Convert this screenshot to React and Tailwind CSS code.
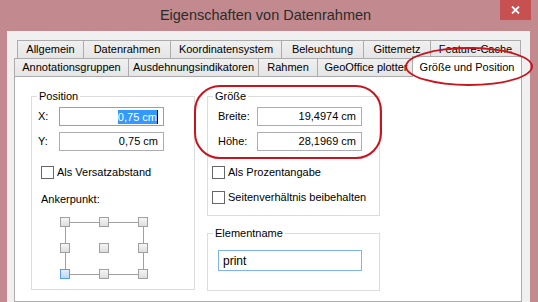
import React from 'react';

const row1 = [
  { label: 'Allgemein', cls: 'w-[67px] border-l' },
  { label: 'Datenrahmen', cls: 'w-[87px]' },
  { label: 'Koordinatensystem', cls: 'w-[111px]' },
  { label: 'Beleuchtung', cls: 'w-[82px]' },
  { label: 'Gittemetz', cls: 'w-[67px]' },
  { label: 'Feature-Cache', cls: 'w-[90px]' },
];

const row2 = [
  { label: 'Annotationsgruppen', cls: 'w-[115px] border-l' },
  { label: 'Ausdehnungsindikatoren', cls: 'w-[130px]' },
  { label: 'Rahmen', cls: 'w-[59px]' },
  { label: 'GeoOffice plotter', cls: 'w-[97px]' },
];

function Tab({ label, cls }) {
  return (
    <div
      className={
        'h-[18px] shrink-0 border-t border-r border-[#acacac] bg-gradient-to-b from-[#f0f0f0] to-[#e5e5e5] flex items-center justify-center whitespace-nowrap ' +
        cls
      }
    >
      {label}
    </div>
  );
}

function Group({ legend, className, children }) {
  return (
    <div className={'relative border border-[#dcdcdc] ' + className}>
      <span className="absolute -top-[8px] left-[5px] px-[2px] bg-white leading-[14px]">
        {legend}
      </span>
      {children}
    </div>
  );
}

function Checkbox({ label, className }) {
  return (
    <div className={'flex items-center h-[13px] gap-[3px] ' + className}>
      <span className="w-[13px] h-[13px] shrink-0 border border-[#666] bg-white" />
      <span className="leading-[13px]">{label}</span>
    </div>
  );
}

function Field({ children, className }) {
  return (
    <div
      className={
        'h-[19px] bg-white border flex items-center justify-end pr-[5px] whitespace-nowrap ' +
        className
      }
    >
      {children}
    </div>
  );
}

function AnchorGrid() {
  const pos = [0, 39, 78];
  const rows = [0, 26, 52];
  return (
    <svg width="88" height="62" viewBox="0 0 88 62">
      <defs>
        <linearGradient id="sq" x1="0" y1="0" x2="0" y2="1">
          <stop offset="0" stopColor="#f7f7f7" />
          <stop offset="1" stopColor="#dcdcdc" />
        </linearGradient>
        <linearGradient id="sqSel" x1="0" y1="0" x2="0" y2="1">
          <stop offset="0" stopColor="#e2f0fd" />
          <stop offset="1" stopColor="#b8d8f8" />
        </linearGradient>
      </defs>
      <g stroke="#a0a0a0" strokeWidth="1">
        <line x1="10" y1="5.5" x2="39" y2="5.5" />
        <line x1="49" y1="5.5" x2="78" y2="5.5" />
        <line x1="10" y1="57.5" x2="39" y2="57.5" />
        <line x1="49" y1="57.5" x2="78" y2="57.5" />
        <line x1="5.5" y1="10" x2="5.5" y2="26" />
        <line x1="5.5" y1="36" x2="5.5" y2="52" />
        <line x1="83.5" y1="10" x2="83.5" y2="26" />
        <line x1="83.5" y1="36" x2="83.5" y2="52" />
      </g>
      {rows.map((y) =>
        pos.map((x) => {
          const sel = x === 0 && y === 52;
          return (
            <rect
              key={x + '-' + y}
              x={x + 0.5}
              y={y + 0.5}
              width="9"
              height="9"
              fill={sel ? 'url(#sqSel)' : 'url(#sq)'}
              stroke={sel ? '#5a9ee0' : '#a0a0a0'}
            />
          );
        })
      )}
    </svg>
  );
}

export default function App() {
  return (
    <div className="relative w-[538px] h-[302px] overflow-hidden bg-[#c28a8e] flex flex-col font-['Liberation_Sans',Arial,sans-serif] text-[11px] text-black">
      {/* title bar */}
      <div className="h-[31px] flex shrink-0">
        <div className="flex-1" />
        <div className="leading-[31px] text-[14.5px] text-[#2b2b2b] whitespace-nowrap">
          Eigenschaften von Datenrahmen
        </div>
        <div className="flex-1 flex justify-end items-start pr-[7px]">
          <div className="w-[31px] h-[20px] bg-[#c75050] flex items-center justify-center">
            <svg width="9" height="8" viewBox="0 0 9 8">
              <path d="M1 0.5 L8 7.5 M8 0.5 L1 7.5" stroke="#fff" strokeWidth="1.8" />
            </svg>
          </div>
        </div>
      </div>

      {/* client area */}
      <div className="flex-1 ml-[7px] mr-[8px] bg-[#f0f0f0] pt-[9px] pl-[7px] pr-[1px] flex flex-col">
        <div className="flex ml-[3px]">
          {row1.map((t) => (
            <Tab key={t.label} {...t} />
          ))}
        </div>
        <div className="flex items-start h-[18px]">
          {row2.map((t) => (
            <Tab key={t.label} {...t} />
          ))}
          <div className="relative z-10 -ml-[3px] -mt-[2px] h-[21px] w-[110px] shrink-0 border-t border-l border-r border-[#acacac] bg-white flex items-center justify-center whitespace-nowrap">
            Größe und Position
          </div>
        </div>

        {/* panel */}
        <div className="flex-1 w-[508px] border border-[#acacac] bg-white flex gap-[12px] pt-[19px] pl-[16px]">
          <Group legend="Position" className="w-[164px] h-[194px] pt-[10px] pl-[6px]">
            <div className="flex items-center">
              <span className="w-[21px]">X:</span>
              <Field className="w-[105px] border-[#6fa9e6]">
                <span className="bg-[#3399ff] text-white leading-[14px]">0,75 cm</span>
                <span className="w-px h-[14px] bg-black" />
              </Field>
            </div>
            <div className="flex items-center mt-[6px]">
              <span className="w-[21px]">Y:</span>
              <Field className="w-[105px] border-[#abadb3]">0,75 cm</Field>
            </div>
            <Checkbox label="Als Versatzabstand" className="mt-[15px] ml-[3px]" />
            <div className="mt-[13px] ml-[3px] leading-[14px]">Ankerpunkt:</div>
            <div className="mt-[11px] ml-[22px] flex">
              <AnchorGrid />
            </div>
          </Group>

          <div className="w-[173px] flex flex-col">
            <Group legend="Größe" className="h-[120px] pt-[10px] pl-[10px]">
              <div className="flex items-center">
                <span className="w-[39px]">Breite:</span>
                <Field className="w-[105px] border-[#abadb3]">19,4974 cm</Field>
              </div>
              <div className="flex items-center mt-[6px]">
                <span className="w-[39px]">Höhe:</span>
                <Field className="w-[105px] border-[#abadb3]">28,1969 cm</Field>
              </div>
              <Checkbox label="Als Prozentangabe" className="mt-[15px] -ml-[6px]" />
              <Checkbox label="Seitenverhältnis beibehalten" className="mt-[12px] -ml-[6px]" />
            </Group>
            <Group legend="Elementname" className="mt-[17px] h-[58px] pt-[16px] pl-[10px]">
              <div className="w-[144px] h-[21px] border border-[#7eb4ea] bg-white flex items-center pl-[4px] text-[12px]">
                print
              </div>
            </Group>
          </div>
        </div>
      </div>

      {/* red annotation marks */}
      <div className="absolute left-[405px] top-[47px] w-[128px] h-[39px] rounded-[50%] border-2 border-[#c8141e] z-20 pointer-events-none" />
      <div className="absolute left-[194px] top-[85px] w-[188px] h-[74px] rounded-[26px] border-2 border-[#c8141e] z-20 pointer-events-none" />
    </div>
  );
}
